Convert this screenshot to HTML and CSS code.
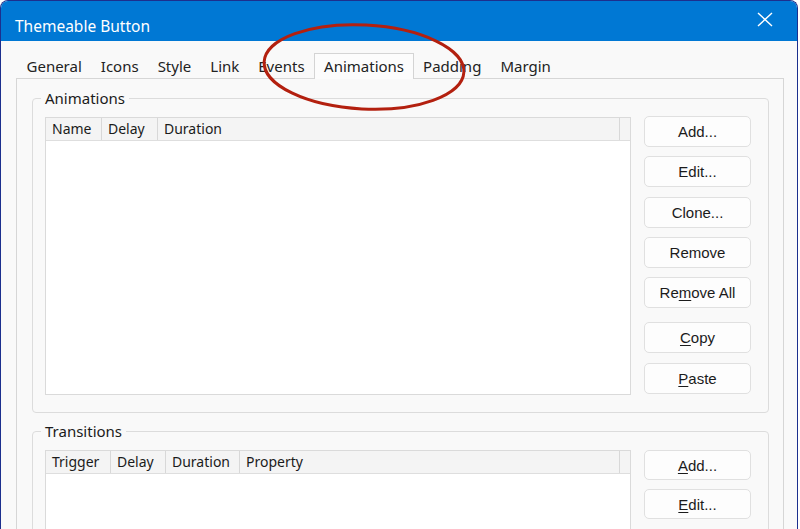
FILE: index.html
```html
<!DOCTYPE html>
<html lang="en">
<head>
    <meta charset="UTF-8">
    <title>Themeable Button</title>
    <link rel="stylesheet" href="styles.css">
</head>
<body>
    <div class="window">
        <!-- Title bar -->
        <div class="titlebar">
            <span class="title">Themeable Button</span>
            <svg class="close" width="16" height="15" viewBox="0 0 16 15">
                <path d="M1 1 L15 14 M15 1 L1 14" stroke="#fff" stroke-width="1.4" fill="none"/>
            </svg>
        </div>

        <div class="content">
            <!-- Tabs -->
            <div class="tabs">
                <span class="tab">General</span>
                <span class="tab">Icons</span>
                <span class="tab">Style</span>
                <span class="tab">Link</span>
                <span class="tab">Events</span>
                <span class="tab active">Animations</span>
                <span class="tab">Padding</span>
                <span class="tab">Margin</span>
            </div>

            <div class="panel">
                <!-- Animations group -->
                <fieldset class="group">
                    <legend>Animations</legend>
                    <div class="group-row">
                        <div class="list list-anim">
                            <div class="list-head">
                                <span class="col col-name">Name</span>
                                <span class="col col-delay">Delay</span>
                                <span class="col col-duration-wide">Duration</span>
                                <span class="col col-rest"></span>
                            </div>
                        </div>
                        <div class="buttons">
                            <button>Add...</button>
                            <button>Edit...</button>
                            <button>Clone...</button>
                            <button>Remove</button>
                            <button>Re<u>m</u>ove All</button>
                            <button class="sep"><u>C</u>opy</button>
                            <button><u>P</u>aste</button>
                        </div>
                    </div>
                </fieldset>

                <!-- Transitions group -->
                <fieldset class="group group-trans">
                    <legend>Transitions</legend>
                    <div class="group-row">
                        <div class="list list-trans">
                            <div class="list-head">
                                <span class="col col-trigger">Trigger</span>
                                <span class="col col-delay2">Delay</span>
                                <span class="col col-duration">Duration</span>
                                <span class="col col-property">Property</span>
                                <span class="col col-rest"></span>
                            </div>
                        </div>
                        <div class="buttons">
                            <button class="short"><u>A</u>dd...</button>
                            <button class="short"><u>E</u>dit...</button>
                        </div>
                    </div>
                </fieldset>
            </div>
        </div>

        <!-- red highlight ring -->
        <svg class="mark" width="230" height="100" viewBox="0 0 230 100">
            <ellipse cx="115" cy="48" rx="100" ry="42" transform="rotate(3 115 48)"
                     fill="none" stroke="#b3200f" stroke-width="3"/>
        </svg>
    </div>
</body>
</html>
```

FILE: styles.css
```css
* {
    margin: 0;
    padding: 0;
    box-sizing: border-box;
}

body {
    background: #ffffff;
    overflow: hidden;
    font-family: "Noto Sans", "DejaVu Sans", sans-serif;
    color: #1b1b1b;
}

.window {
    position: relative;
    width: 798px;
    height: 620px;
    background: #f9f9f9;
    border: 1px solid #1c2f8e;
    border-bottom: none;
    border-radius: 8px 8px 0 0;
    overflow: hidden;
}

.titlebar {
    height: 40px;
    background: #0078d4;
    display: flex;
    align-items: center;
    justify-content: space-between;
    padding: 0 24px 0 14px;
}

.title {
    color: #ffffff;
    font-size: 15.5px;
    margin-top: 10px;
}

.close {
    margin-top: -4px;
}

.content {
    padding: 0 13px 0 15px;
}

.tabs {
    display: flex;
    padding-left: 1px;
    margin-top: 12px;
    height: 25px;
}

.tab {
    font-size: 15px;
    line-height: 26px;
    padding: 0 9.5px;
    color: #222;
}

.tab.active {
    border: 1px solid #d4d4d4;
    border-bottom: none;
    background: #fcfcfc;
    padding: 0 8.5px 0 9px;
    line-height: 25px;
    position: relative;
    z-index: 1;
    height: 26px;
}

.panel {
    border: 1px solid #d6d6d6;
    background: #f9f9f9;
    padding: 10px 14px 0 15px;
    height: 560px;
}

.group {
    border: 1px solid #dcdcdc;
    border-radius: 4px;
    padding: 10px 16px 17px 12px;
}

.group legend {
    font-size: 15px;
    line-height: 18px;
    padding: 0 4px;
    margin-left: -4px;
    margin-top: -1px;
    color: #1b1b1b;
}

.group-trans {
    margin-top: 9px;
}

.group-row {
    display: flex;
    gap: 13px;
}

.list {
    width: 586px;
    height: 278px;
    background: #ffffff;
    border: 1px solid #dadada;
}

.list-head {
    display: flex;
    height: 23px;
    background: #f4f4f4;
    border-bottom: 1px solid #dedede;
}

.col {
    font-size: 14px;
    line-height: 22px;
    padding-left: 6px;
    border-right: 1px solid #d8d8d8;
}

.col-name { width: 56px; }
.col-delay { width: 56px; }
.col-duration-wide { width: 462px; }
.col-trigger { width: 65px; }
.col-delay2 { width: 55px; }
.col-duration { width: 74px; }
.col-property { width: 380px; }
.col-rest { flex: 1; border-right: none; }

.buttons {
    display: flex;
    flex-direction: column;
    gap: 9.25px;
    margin-top: -1px;
}

.group-trans .buttons {
    margin-top: 0;
}

button {
    width: 107px;
    height: 31px;
    background: #fdfdfd;
    border: 1px solid #e0e0e0;
    border-radius: 5px;
    font-family: "Liberation Sans", Arial, sans-serif;
    font-size: 15px;
    color: #1b1b1b;
}

button u {
    text-underline-offset: 2px;
}

button.sep {
    margin-top: 5px;
}

button.short {
    height: 30px;
}

.mark {
    position: absolute;
    left: 248px;
    top: 18px;
}
```
